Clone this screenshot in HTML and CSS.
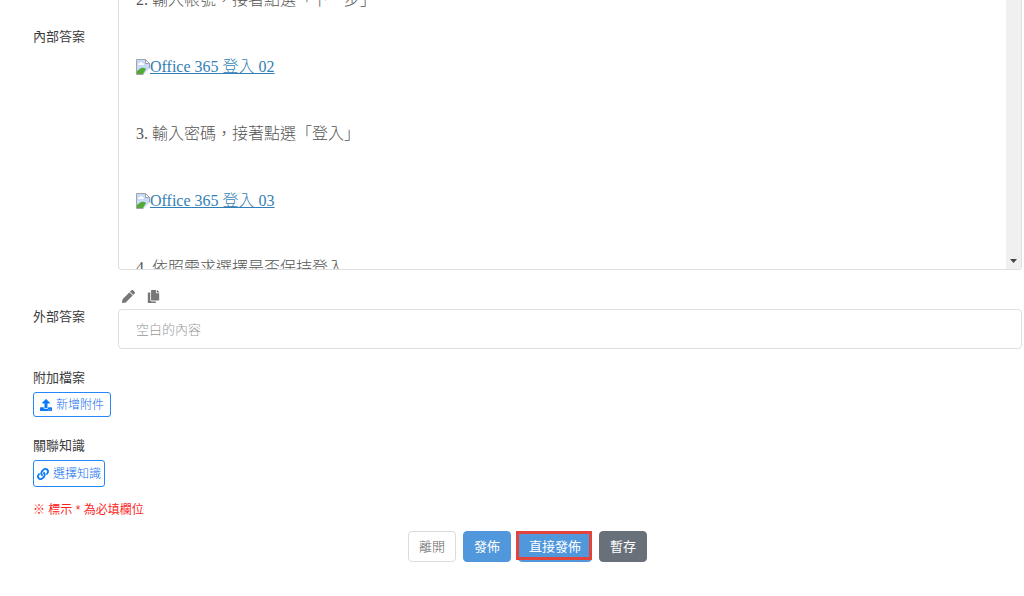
FILE: index.html
```html
<!DOCTYPE html>
<html lang="zh-Hant">

<head>
  <meta charset="UTF-8">
  <meta name="viewport" content="width=device-width, initial-scale=1.0">
  <title>知識編輯</title>
  <link rel="stylesheet" href="styles.css">
</head>

<body>
  <form class="editor">
    <div class="row">
      <span class="label inner-label">內部答案</span>
      <div class="answer">
        <div class="answer-content">
          <p>2. 輸入帳號，接著點選「下一步」</p>
          <p><a href="#"><svg class="broken" viewBox="0 0 14 16"><path d="M.5.5h9l4 4v6l-4 5h-9z" fill="#c8dafa" stroke="#a0a4a8"/><path d="M9.500 .5v4h4z" fill="#fff" stroke="#a0a4a8"/><path d="M2 6q0-2 2-2 1-2 2.500 0Q8 4 8 6z" fill="#fff"/><path d="M1 15v-3l4-3q3-1 5 1l-3 5z" fill="#52aa35"/><path d="M7 16l7-7v7z" fill="#fff"/></svg><span>Office 365 登入 02</span></a></p>
          <p>3. 輸入密碼，接著點選「登入」</p>
          <p><a href="#"><svg class="broken" viewBox="0 0 14 16"><path d="M.5.5h9l4 4v6l-4 5h-9z" fill="#c8dafa" stroke="#a0a4a8"/><path d="M9.500 .5v4h4z" fill="#fff" stroke="#a0a4a8"/><path d="M2 6q0-2 2-2 1-2 2.500 0Q8 4 8 6z" fill="#fff"/><path d="M1 15v-3l4-3q3-1 5 1l-3 5z" fill="#52aa35"/><path d="M7 16l7-7v7z" fill="#fff"/></svg><span>Office 365 登入 03</span></a></p>
          <p>4. 依照需求選擇是否保持登入</p>
        </div>
        <div class="scrollbar">
          <svg class="arrow" viewBox="0 0 7 4"><path d="M0 0h7L3.500 4z"/></svg>
        </div>
      </div>
    </div>

    <div class="row outer-row">
      <label class="label" for="outer">外部答案</label>
      <div class="field">
        <div class="tools">
          <button type="button" class="tool" aria-label="編輯">
            <svg viewBox="0 0 512 512"><path d="M498 142l-46 46c-5 5-12 5-17 0L324 77c-5-5-5-12 0-17l46-46c19-19 49-19 68 0l60 60c19 19 19 49 0 68zM285 100L22 363 0 484c-3 17 12 31 28 28l121-21 263-263c5-5 5-12 0-17L301 100c-4-5-12-5-16 0z"/></svg>
          </button>
          <button type="button" class="tool" aria-label="複製">
            <svg viewBox="0 0 448 512"><path d="M320 448v40c0 13-11 24-24 24H24c-13 0-24-11-24-24V120c0-13 11-24 24-24h72v296c0 31 25 56 56 56zm0-344V0H152c-13 0-24 11-24 24v368c0 13 11 24 24 24h272c13 0 24-11 24-24V128H344c-13 0-24-11-24-24zm121-31L375 7c-4-4-11-7-17-7h-6v96h96v-6c0-6-3-12-7-17z"/></svg>
          </button>
        </div>
        <input type="text" id="outer" class="outer" placeholder="空白的內容">
      </div>
    </div>

    <section class="group">
      <div class="label">附加檔案</div>
      <button type="button" class="small-btn upload">
        <svg viewBox="0 0 512 512"><path d="M296 384h-80c-13 0-24-11-24-24V192h-88c-18 0-27-22-14-34L242 6c8-8 20-8 28 0l152 152c13 12 4 34-14 34h-88v168c0 13-11 24-24 24zm216-8v112c0 13-11 24-24 24H24c-13 0-24-11-24-24V376c0-13 11-24 24-24h136v8c0 31 25 56 56 56h80c31 0 56-25 56-56v-8h136c13 0 24 11 24 24zm-124 88c0-11-9-20-20-20s-20 9-20 20 9 20 20 20 20-9 20-20zm64 0c0-11-9-20-20-20s-20 9-20 20 9 20 20 20 20-9 20-20z"/></svg>
        新增附件
      </button>
    </section>

    <section class="group">
      <div class="label">關聯知識</div>
      <button type="button" class="small-btn choose">
        <svg viewBox="0 0 512 512"><path d="M326.600 185.400c59.700 59.800 58.900 155.700.4 214.600l-.4.400-67.200 67.200c-59.300 59.300-155.700 59.300-215 0-59.300-59.300-59.300-155.700 0-215l37.100-37.100c9.800-9.800 26.800-3.300 27.300 10.600.6 17.700 3.800 35.500 9.700 52.700 2 5.800.6 12.300-3.800 16.600l-13.100 13.100c-28 28-28.900 73.700-1.200 102 28 28.600 74.100 28.700 102.300.5l67.200-67.200c28.200-28.200 28.100-73.800 0-101.800-3.700-3.700-7.400-6.600-10.300-8.600a16 16 0 0 1-6.900-12.600c-.4-10.600 3.300-21.500 11.700-29.800l21.100-21.100c5.500-5.500 14.200-6.200 20.600-1.700a152.500 152.500 0 0 1 20.500 17.200zM467.500 44.400c-59.300-59.300-155.700-59.300-215 0l-67.200 67.200-.4.400c-58.500 58.900-59.300 154.800.4 214.600a152.500 152.500 0 0 0 20.500 17.200c6.400 4.500 15.100 3.800 20.600-1.700l21.100-21.100c8.400-8.300 12.100-19.200 11.700-29.800a16 16 0 0 0-6.900-12.600c-2.900-2-6.600-4.900-10.300-8.600-28.100-28-28.200-73.600 0-101.800l67.200-67.200c28.200-28.200 74.300-28.100 102.300.5 27.700 28.300 26.800 74-1.200 102l-13.100 13.100c-4.400 4.300-5.800 10.800-3.800 16.600 5.900 17.200 9.100 35 9.700 52.700.5 13.900 17.500 20.400 27.300 10.600l37.100-37.100c59.300-59.300 59.300-155.700 0-215z"/></svg>
        選擇知識
      </button>
    </section>

    <p class="required">※ 標示 * 為必填欄位</p>

    <div class="actions">
      <button type="button" class="btn leave">離開</button>
      <button type="button" class="btn publish">發佈</button>
      <button type="button" class="btn publish direct">直接發佈</button>
      <button type="button" class="btn save">暫存</button>
    </div>
  </form>
</body>

</html>
```
FILE: styles.css
```css
* {
  box-sizing: border-box;
}

body {
  margin: 0;
  background-color: #fff;
  color: #3c3c3c;
  font-family: 'Liberation Sans', 'Noto Sans CJK TC', sans-serif;
  font-size: 13px;
  line-height: 20px;
}

button,
input {
  font-family: inherit;
  font-size: 13px;
  line-height: 20px;
}

.editor {
  padding: 0 2px 0 33px;
}

.row {
  display: grid;
  grid-template-columns: 85px 1fr;
}

.inner-label {
  padding-top: 27px;
}

.answer {
  display: flex;
  justify-content: space-between;
  height: 270px;
  overflow: hidden;
  border: 1px solid #dedfe0;
  border-top: 0;
  border-radius: 0 0 4px 4px;
}

.answer-content {
  margin-top: -12px;
  padding-left: 17px;
  color: #555;
  font-family: 'Liberation Serif', 'Noto Sans CJK TC', serif;
  font-size: 16px;
  font-weight: 300;
  line-height: 24px;
}

.answer-content p {
  margin: 0 0 43px;
}

.answer-content a {
  display: flex;
  align-items: center;
  color: #337fb5;
  text-decoration: none;
}

.answer-content a span {
  text-decoration: underline;
}

.broken {
  width: 14px;
  height: 16px;
}

.scrollbar {
  display: flex;
  align-items: flex-end;
  justify-content: center;
  width: 15px;
  padding-bottom: 6px;
  background-color: #f0f0f0;
}

.arrow {
  width: 7px;
  height: 4px;
  fill: #444;
}

.outer-row {
  align-items: center;
  margin-top: 15px;
}

.tools {
  display: flex;
  align-items: center;
  gap: 12px;
  height: 24px;
  padding: 0 4px 2px;
}

.tool {
  display: flex;
  padding: 0;
  border: 0;
  background: none;
}

.tool svg {
  width: 13px;
  height: 13px;
  fill: #777;
}

.outer {
  display: block;
  width: 100%;
  height: 40px;
  padding: 0 17px;
  border: 1px solid #dedfe0;
  border-radius: 4px;
}

.outer::placeholder {
  color: #999;
  font-weight: 300;
}

.group {
  margin-top: 19px;
}

.small-btn {
  display: flex;
  align-items: center;
  gap: 4px;
  margin-top: 4px;
  border: 1px solid #2488fa;
  border-radius: 3px;
  background-color: #fff;
  color: #0b6cf0;
  font-size: 12px;
  font-weight: 300;
}

.small-btn svg {
  width: 12px;
  height: 12px;
  fill: #0b7bf8;
}

.upload {
  height: 25px;
  padding: 0 6px;
}

.choose {
  height: 27px;
  padding: 0 3px;
}

.required {
  margin: 13px 0 0;
  color: #fa1e1e;
  font-size: 12px;
}

.actions {
  display: flex;
  justify-content: center;
  gap: 7px;
  margin-top: 11px;
}

.btn {
  height: 31px;
  padding: 0 10px;
  border: 1px solid #5197dc;
  border-radius: 4px;
  color: #fff;
}

.leave {
  border-color: #dbdbdb;
  background-color: #fff;
  color: #666;
  font-weight: 300;
}

.publish {
  background-color: #5197dc;
}

.direct {
  position: relative;
}

.direct::after {
  content: "";
  position: absolute;
  inset: -1px -1px 1px -3px;
  border: 3px solid #e2433b;
}

.save {
  border-color: #68717a;
  background-color: #68717a;
}
```
